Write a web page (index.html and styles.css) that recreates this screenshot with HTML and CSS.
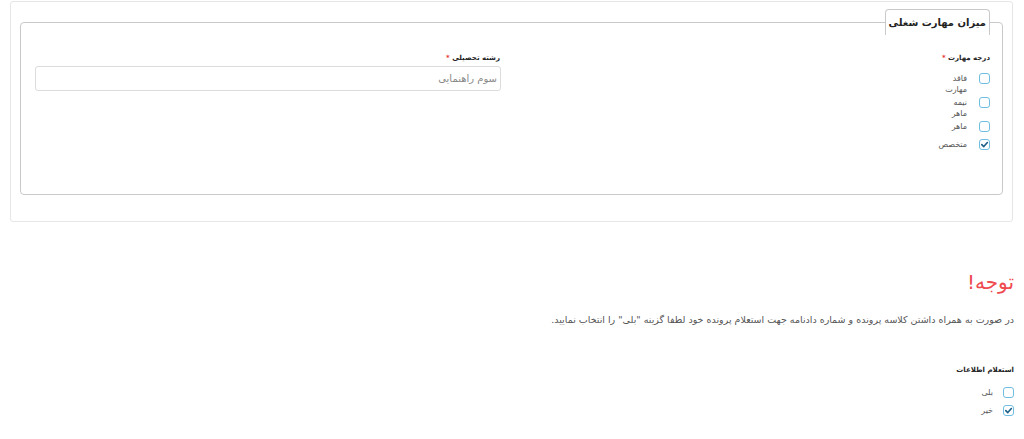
FILE: index.html
```html
<!DOCTYPE html>
<html lang="fa" dir="rtl">
<head>
<meta charset="utf-8">
<title>میزان مهارت شغلی</title>
<link rel="stylesheet" href="styles.css">
</head>
<body>
<div class="panel">
  <fieldset class="box">
    <legend class="tab"><span class="tab-text">میزان مهارت شغلی</span></legend>
    <div class="grid">
      <div class="col">
        <div class="label">درجه مهارت <span class="req">*</span></div>
        <ul class="checks">
          <li class="item"><span class="cb"></span><span class="txt">فاقد مهارت</span></li>
          <li class="item"><span class="cb"></span><span class="txt">نیمه ماهر</span></li>
          <li class="item"><span class="cb"></span><span class="txt">ماهر</span></li>
          <li class="item"><span class="cb on"><svg viewBox="0 0 10 10"><path d="M2 5.2 L4.2 7.3 L8.2 2.8" /></svg></span><span class="txt">متخصص</span></li>
        </ul>
      </div>
      <div class="col"></div>
      <div class="col">
        <div class="label label-r">رشته تحصیلی <span class="req">*</span></div>
        <div class="input">سوم راهنمایی</div>
      </div>
    </div>
  </fieldset>
</div>

<div class="notice">
  <h3 class="title">توجه!</h3>
  <p class="desc">در صورت به همراه داشتن کلاسه پرونده و شماره دادنامه جهت استعلام پرونده خود لطفا گزینه "بلی" را انتخاب نمایید.</p>
  <div class="label2">استعلام اطلاعات</div>
  <ul class="checks2">
    <li class="item2"><span class="cb"></span><span class="txt2">بلی</span></li>
    <li class="item2"><span class="cb on"><svg viewBox="0 0 10 10"><path d="M2 5.2 L4.2 7.3 L8.2 2.8" /></svg></span><span class="txt2">خیر</span></li>
  </ul>
</div>
</body>
</html>
```

FILE: styles.css
```css
html, body {
  margin: 0;
  padding: 0;
  background: #ffffff;
}
body {
  direction: rtl;
  font-family: "DejaVu Sans", Tahoma, sans-serif;
  color: #333;
}
.panel {
  margin: 1px 11px 0 10px;
  border: 1px solid #e6e6e6;
  border-radius: 3px;
  padding: 7px 9px 26px 9px;
}
.box {
  margin: 0;
  border: 1px solid #c9c9c9;
  border-radius: 4px;
  padding: 17px 12px 37px 14px;
  min-width: 0;
}
.tab {
  box-sizing: border-box;
  height: 26px;
  padding: 0 3px;
  text-align: right;
  background: #fff;
  border: 1px solid #c9c9c9;
  border-bottom: none;
  border-radius: 4px 4px 0 0;
}
.tab-text {
  display: block;
  font-size: 10px;
  font-weight: bold;
  line-height: 25px;
  color: #222;
  white-space: nowrap;
}
.grid {
  display: grid;
  grid-template-columns: 240px 248px 1fr;
}
.label {
  font-size: 7px;
  font-weight: bold;
  line-height: 12px;
  color: #222;
  margin-bottom: 9px;
}
.label-r {
  margin-bottom: 2px;
  padding-right: 2px;
}
.req {
  color: #e53935;
}
.checks, .checks2 {
  list-style: none;
  margin: 0;
  padding: 0;
}
.item {
  display: flex;
  align-items: flex-start;
  gap: 12px;
  min-height: 16px;
  margin-bottom: 2px;
}
.cb {
  box-sizing: border-box;
  flex: none;
  width: 11px;
  height: 11px;
  border: 1.5px solid #70bde2;
  border-radius: 3px;
  background: #fff;
  display: flex;
  align-items: center;
  justify-content: center;
}
.cb svg {
  width: 9px;
  height: 9px;
}
.cb svg path {
  fill: none;
  stroke: #1d5f88;
  stroke-width: 1.8;
  stroke-linecap: round;
  stroke-linejoin: round;
}
.txt {
  width: 28px;
  font-size: 8px;
  line-height: 11px;
  color: #555;
  white-space: normal;
}
.input {
  box-sizing: border-box;
  height: 25px;
  border: 1px solid #dcdcdc;
  border-radius: 3px;
  padding: 0 3px;
  margin-right: 1px;
  font-size: 10px;
  line-height: 23px;
  color: #8a8a8a;
}
.notice {
  margin: 0 10px 0 10px;
}
.title {
  margin: 46px 0 17px 0;
  font-size: 20px;
  font-weight: normal;
  line-height: 28px;
  color: #ee4a4f;
}
.desc {
  margin: 0 0 36px 0;
  font-size: 9.5px;
  line-height: 14px;
  color: #555;
}
.label2 {
  font-size: 7px;
  font-weight: bold;
  line-height: 14px;
  color: #222;
  margin-bottom: 6px;
}
.item2 {
  display: flex;
  align-items: center;
  gap: 10px;
  height: 18px;
}
.txt2 {
  font-size: 8px;
  color: #555;
}
```
